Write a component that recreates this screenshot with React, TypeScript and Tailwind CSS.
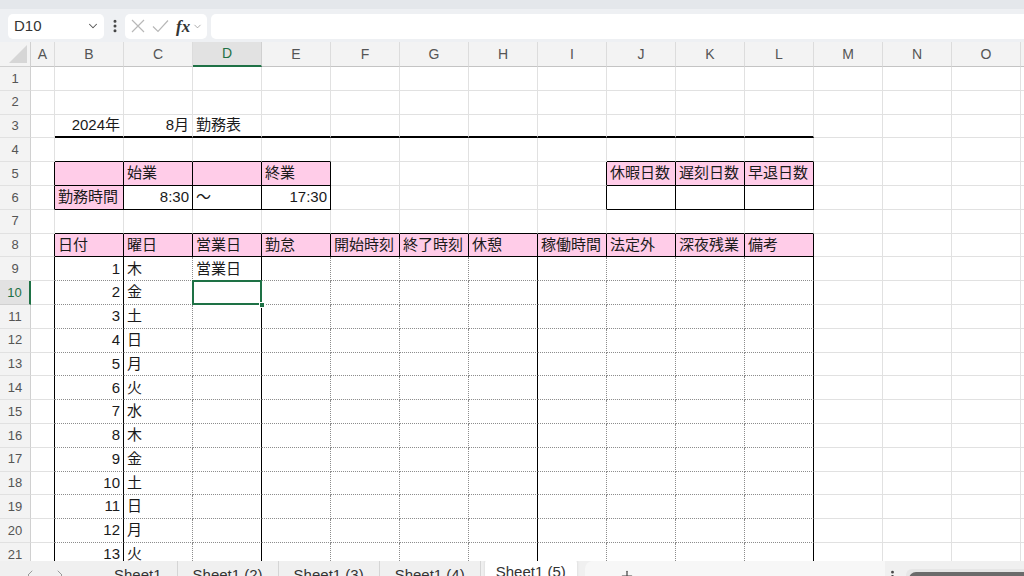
import React from 'react';
import { ChevronDown, ChevronLeft, ChevronRight, EllipsisVertical, Plus } from 'lucide-react';

const COLS = ['A', 'B', 'C', 'D', 'E', 'F', 'G', 'H', 'I', 'J', 'K', 'L', 'M', 'N', 'O', 'P'];
const ROWS = Array.from({ length: 22 }, (_, i) => i + 1);
const DAYS = ['木', '金', '土', '日', '月', '火', '水', '木', '金', '土', '日', '月', '火', '水'];
const HEAD8 = ['日付', '曜日', '営業日', '勤怠', '開始時刻', '終了時刻', '休憩', '稼働時間', '法定外', '深夜残業', '備考'];

type Txt = { t: string; right?: boolean };

// what is written in each cell, keyed "row-col"
const content: Record<string, Txt> = {
  '3-1': { t: '2024年', right: true },
  '3-2': { t: '8月', right: true },
  '3-3': { t: '勤務表' },
  '5-2': { t: '始業' },
  '5-4': { t: '終業' },
  '5-9': { t: '休暇日数' },
  '5-10': { t: '遅刻日数' },
  '5-11': { t: '早退日数' },
  '6-1': { t: '勤務時間' },
  '6-2': { t: '8:30', right: true },
  '6-3': { t: '〜' },
  '6-4': { t: '17:30', right: true },
  '9-3': { t: '営業日' },
};
HEAD8.forEach((h, i) => (content[`8-${i + 1}`] = { t: h }));
for (let r = 9; r <= 22; r++) {
  content[`${r}-1`] = { t: String(r - 8), right: true };
  content[`${r}-2`] = { t: DAYS[r - 9] };
}

const inTop = (c: number) => (c >= 1 && c <= 4) || (c >= 9 && c <= 11);

function rightKind(r: number, c: number) {
  if (r === 5 || r === 6) {
    if (c >= 0 && c <= 4) return 'solid';
    if (c >= 8 && c <= 11) return 'solid';
  }
  if (r >= 8) {
    if (c === 0) return 'solid';
    if (r === 8 && c <= 11) return 'solid';
    if ([1, 3, 7, 11].includes(c)) return 'solid';
    if ([2, 4, 5, 6, 8, 9, 10].includes(c)) return 'dashed';
  }
  return 'grid';
}

function bottomKind(r: number, c: number) {
  const inMain = c >= 1 && c <= 11;
  if (r === 3 && inMain) return 'thick';
  if ((r === 4 || r === 5 || r === 6) && inTop(c)) return 'solid';
  if ((r === 7 || r === 8) && inMain) return 'solid';
  if (r >= 9 && inMain) return 'dashed';
  return 'grid';
}

function isPink(r: number, c: number) {
  if (r === 5 && inTop(c)) return true;
  if (r === 6 && c === 1) return true;
  if (r === 8 && c >= 1 && c <= 11) return true;
  return false;
}

const RIGHT: Record<string, string> = {
  grid: 'border-r border-r-[#e1e1e1]',
  solid: 'border-r border-r-black',
  dashed: 'border-r border-r-[#8c8c8c] [border-right-style:dotted]',
};
const BOTTOM: Record<string, string> = {
  grid: 'border-b border-b-[#e1e1e1]',
  solid: 'border-b border-b-black',
  dashed: 'border-b border-b-[#8c8c8c] [border-bottom-style:dotted]',
  thick: 'border-b-2 border-b-black',
};

const Cell: React.FC<{ r: number; c: number }> = ({ r, c }) => {
  const txt = content[`${r}-${c}`];
  const selected = r === 10 && c === 3;
  return (
    <div
      className={`relative shrink-0 h-full ${c === 0 ? 'w-[24px]' : 'w-[69px]'} ${RIGHT[rightKind(r, c)]} ${BOTTOM[bottomKind(r, c)]} ${
        isPink(r, c) ? 'bg-[#ffcce8]' : 'bg-white'
      }`}
    >
      {txt && (
        <div className={`flex h-full items-center whitespace-nowrap px-[3px] ${txt.right ? 'justify-end' : 'justify-start'}`}>
          {txt.t}
        </div>
      )}
      {selected && (
        <>
          <div className="absolute inset-[-1px] z-10 border-2 border-[#1e7145]" />
          <div className="absolute -bottom-[4px] -right-[4px] z-10 h-[6px] w-[6px] border border-white bg-[#1e7145]" />
        </>
      )}
    </div>
  );
};

const FormulaBar = () => (
  <div className="flex h-[33px] shrink-0 items-center bg-[#eef0f3] pl-[8px] pt-[1px]">
    <div className="flex h-[25px] w-[96px] items-center justify-between rounded-[5px] bg-white pl-[6px] pr-[4px] text-[15px] text-[#333]">
      <span>D10</span>
      <ChevronDown size={14} strokeWidth={1.8} className="text-[#555]" />
    </div>
    <EllipsisVertical size={16} strokeWidth={2.5} className="ml-[3px] text-[#444]" />
    <div className="ml-[2px] flex h-[25px] w-[82px] items-center rounded-[5px] bg-white pl-[6px]">
      <svg width="14" height="14" viewBox="0 0 14 14" className="shrink-0">
        <path d="M1 1 L13 13 M13 1 L1 13" stroke="#b8b8b8" strokeWidth="1.2" fill="none" />
      </svg>
      <svg width="17" height="14" viewBox="0 0 17 14" className="ml-[7px] shrink-0">
        <path d="M1 7.5 L6 12.5 L16 1.5" stroke="#b8b8b8" strokeWidth="1.2" fill="none" />
      </svg>
      <span className="ml-[7px] font-['Liberation_Serif',serif] text-[17px] font-bold italic leading-none text-[#333]">fx</span>
      <ChevronDown size={11} strokeWidth={1.5} className="ml-[2px] text-[#888]" />
    </div>
    <div className="ml-[4px] h-[25px] flex-1 rounded-l-[5px] bg-white" />
  </div>
);

const ColumnHeader = () => (
  <div className="flex h-[25px] shrink-0 bg-[#f3f3f3] text-[14px] text-[#555]">
    <div className="relative w-[31px] shrink-0 border-b border-r border-[#d0d0d0]">
      <svg className="absolute bottom-[3px] right-[3px]" width="18" height="18" viewBox="0 0 18 18">
        <polygon points="18,0 18,18 0,18" fill="#d6d6d6" />
      </svg>
    </div>
    {COLS.map((col, c) => (
      <div
        key={col}
        className={`flex shrink-0 items-center justify-center border-r ${c === 0 ? 'w-[24px]' : 'w-[69px]'} ${
          c === 3
            ? 'border-r-[#d0d0d0] border-b-2 border-b-[#1e7145] bg-[#e2e2e2] text-[#1e7145]'
            : 'border-r-[#dcdcdc] border-b border-b-[#c4c4c4]'
        }`}
      >
        {col}
      </div>
    ))}
  </div>
);

const Row: React.FC<{ r: number }> = ({ r }) => (
  <div className="flex h-[23.8px] shrink-0">
    <div
      className={`flex w-[31px] shrink-0 items-center justify-center text-[13px] ${
        r === 10
          ? 'border-r-2 border-r-[#1e7145] border-b border-b-[#d0d0d0] bg-[#e2e2e2] text-[#1e7145]'
          : 'border-r border-r-[#d0d0d0] border-b border-b-[#e1e1e1] bg-[#f3f3f3] text-[#555]'
      }`}
    >
      {r}
    </div>
    {COLS.map((_, c) => (
      <Cell key={c} r={r} c={c} />
    ))}
  </div>
);

const TabBar = () => (
  <div className="flex h-[36px] shrink-0 items-start bg-[#f0f0f0] text-[15px] text-[#333]">
    <div className="flex w-[99px] shrink-0 items-center gap-[14px] pl-[22px] pt-[6px] text-[#9a9a9a]">
      <ChevronLeft size={16} strokeWidth={1.5} />
      <ChevronRight size={16} strokeWidth={1.5} />
    </div>
    {['Sheet1', 'Sheet1 (2)', 'Sheet1 (3)', 'Sheet1 (4)'].map((s) => (
      <div key={s} className="shrink-0 border-r border-r-[#d5d5d5] px-[15px] pt-[4px] leading-[20px]">
        {s}
      </div>
    ))}
    <div className="-mt-[4px] ml-[4px] shrink-0 rounded-t-[6px] bg-white px-[11px] pt-[5px] leading-[20px] shadow-[0_-1px_3px_rgba(0,0,0,0.12)]">
      Sheet1 (5)
    </div>
    <div className="ml-[8px] flex h-[30px] w-[300px] shrink-0 items-start rounded-tl-[8px] bg-[#f7f7f7] pl-[34px] pt-[7px]">
      <Plus size={16} strokeWidth={1.8} className="text-[#444]" />
    </div>
    <div className="flex shrink-0 items-start pt-[8px]">
      <EllipsisVertical size={15} strokeWidth={2.5} className="text-[#444]" />
    </div>
    <div className="ml-[6px] mt-[8px] flex h-[20px] flex-1 items-center rounded-l-[6px] bg-[#e6e6e6] pl-[3px]">
      <div className="h-[14px] flex-1 rounded-l-[7px] bg-[#6b6b6b]" />
    </div>
  </div>
);

export default function App() {
  return (
    <div className="flex h-[576px] w-[1024px] flex-col overflow-hidden bg-white font-['Liberation_Sans','Noto_Sans_CJK_JP',sans-serif] text-[15px] text-[#1a1a1a]">
      <div className="h-[9px] shrink-0 bg-[#e4e7eb] shadow-[0_1px_2px_rgba(0,0,0,0.08)]" />
      <FormulaBar />
      <div className="flex h-[519px] shrink-0 flex-col overflow-hidden">
        <ColumnHeader />
        {ROWS.map((r) => (
          <Row key={r} r={r} />
        ))}
      </div>
      <TabBar />
    </div>
  );
}
